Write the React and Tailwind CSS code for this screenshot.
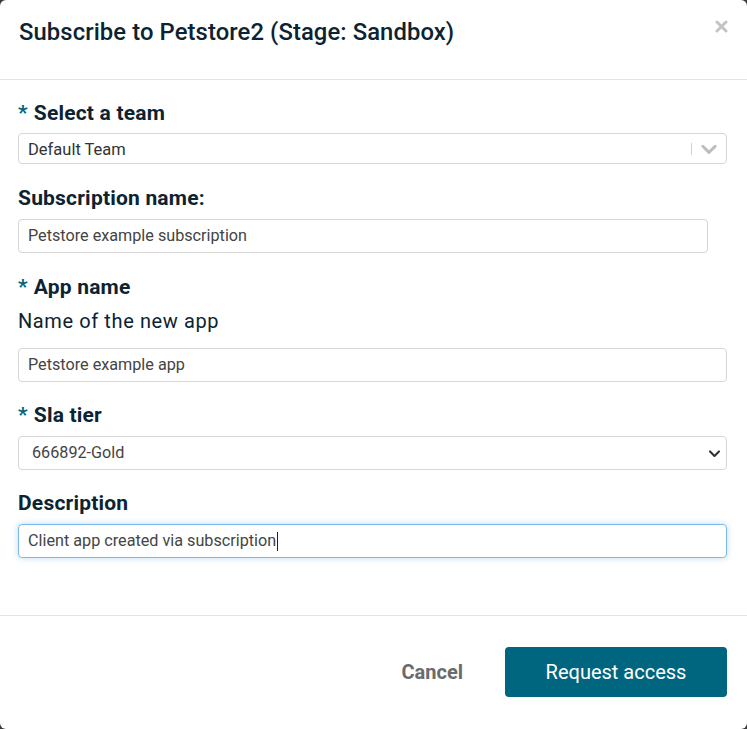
import React from "react";

const Req = () => <span className="text-[#00657f] mr-1.5">*</span>;

const Label = ({ required, children, className = "" }) => (
  <div className={`h-6 flex items-center text-[21px] font-bold text-[#0c2331] leading-6 tracking-[0.2px] ${className}`}>
    {required && <Req />}
    {children}
  </div>
);

const Chevron = ({ color = "#333", size = 14, stroke = 2.4 }) => (
  <svg width={size} height={size} viewBox="0 0 16 16" fill="none">
    <path d="M2.5 5.5 L8 11 L13.5 5.5" stroke={color} strokeWidth={stroke} strokeLinecap="round" strokeLinejoin="round" />
  </svg>
);

export default function App() {
  return (
    <div className="w-[747px] h-[729px] bg-[#3a3a3a] font-['Roboto',sans-serif]">
      <div className="w-full h-full bg-white rounded-md flex flex-col">
        {/* Header */}
        <div className="h-[80px] border-b border-[#e3e3e3] flex items-start justify-between pl-[19px] pr-[19px]">
          <h2 className="mt-[18px] text-[23.8px] font-medium text-[#0c2331] leading-7 tracking-[0.1px]">
            Subscribe to Petstore2 (Stage: Sandbox)
          </h2>
          <svg className="mt-[20px]" width="13" height="13" viewBox="0 0 13 13">
            <path d="M2 2 L11 11 M11 2 L2 11" stroke="#c4c4c4" strokeWidth="3" strokeLinecap="round" />
          </svg>
        </div>

        {/* Body */}
        <div className="flex-1 pl-[18px] pr-5 pt-[21px]">
          <Label required>Select a team</Label>
          <div className="mt-2 h-[31px] border border-[#d6d6d6] rounded-[4px] flex items-center pl-[9px] pr-2 text-[16.5px] text-[#333]">
            <span className="flex-1 pt-[3px]">Default Team</span>
            <span className="w-px h-3 bg-[#d0d0d0] mr-2" />
            <Chevron color="#bdbdbd" size={18} stroke={2.6} />
          </div>

          <Label className="mt-[22px]">Subscription name:</Label>
          <div className="mt-[9px] w-[690px] h-[34px] border border-[#d6d6d6] rounded-[4px] flex items-center pl-[9px] text-[16.2px] text-[#444]">
            Petstore example subscription
          </div>

          <Label required className="mt-[22px]">App name</Label>
          <div className="mt-[10px] h-6 flex items-center text-[20px] text-[#0c2331] tracking-[0.6px]">
            Name of the new app
          </div>
          <div className="mt-[15px] h-[34px] border border-[#d6d6d6] rounded-[4px] flex items-center pl-[9px] text-[16.2px] text-[#444]">
            Petstore example app
          </div>

          <Label required className="mt-[21px]">Sla tier</Label>
          <div className="mt-[9px] h-[34px] border border-[#d6d6d6] rounded-[4px] flex items-center pl-[13px] pr-[5px] text-[16.2px] text-[#444]">
            <span className="flex-1">666892-Gold</span>
            <Chevron color="#333" size={13} stroke={2.6} />
          </div>

          <Label className="mt-[21px]">Description</Label>
          <div className="mt-[9px] h-[34px] border border-[#7cb9ea] rounded-[4px] shadow-[0_0_6px_rgba(102,175,233,0.45)] flex items-center pl-[9px] text-[16.2px] text-[#444]">
            Client app created via subscription
            <span className="w-px h-[19px] bg-[#222] ml-px" />
          </div>
        </div>

        {/* Footer */}
        <div className="h-[114px] border-t border-[#e3e3e3] flex items-center justify-end pr-5 pb-[2px]">
          <button className="text-[20px] font-bold text-[#6b6b6b] mr-[42px]">Cancel</button>
          <button className="w-[222px] h-[50px] bg-[#00657f] rounded-[4px] text-white text-[20px]">
            Request access
          </button>
        </div>
      </div>
    </div>
  );
}
